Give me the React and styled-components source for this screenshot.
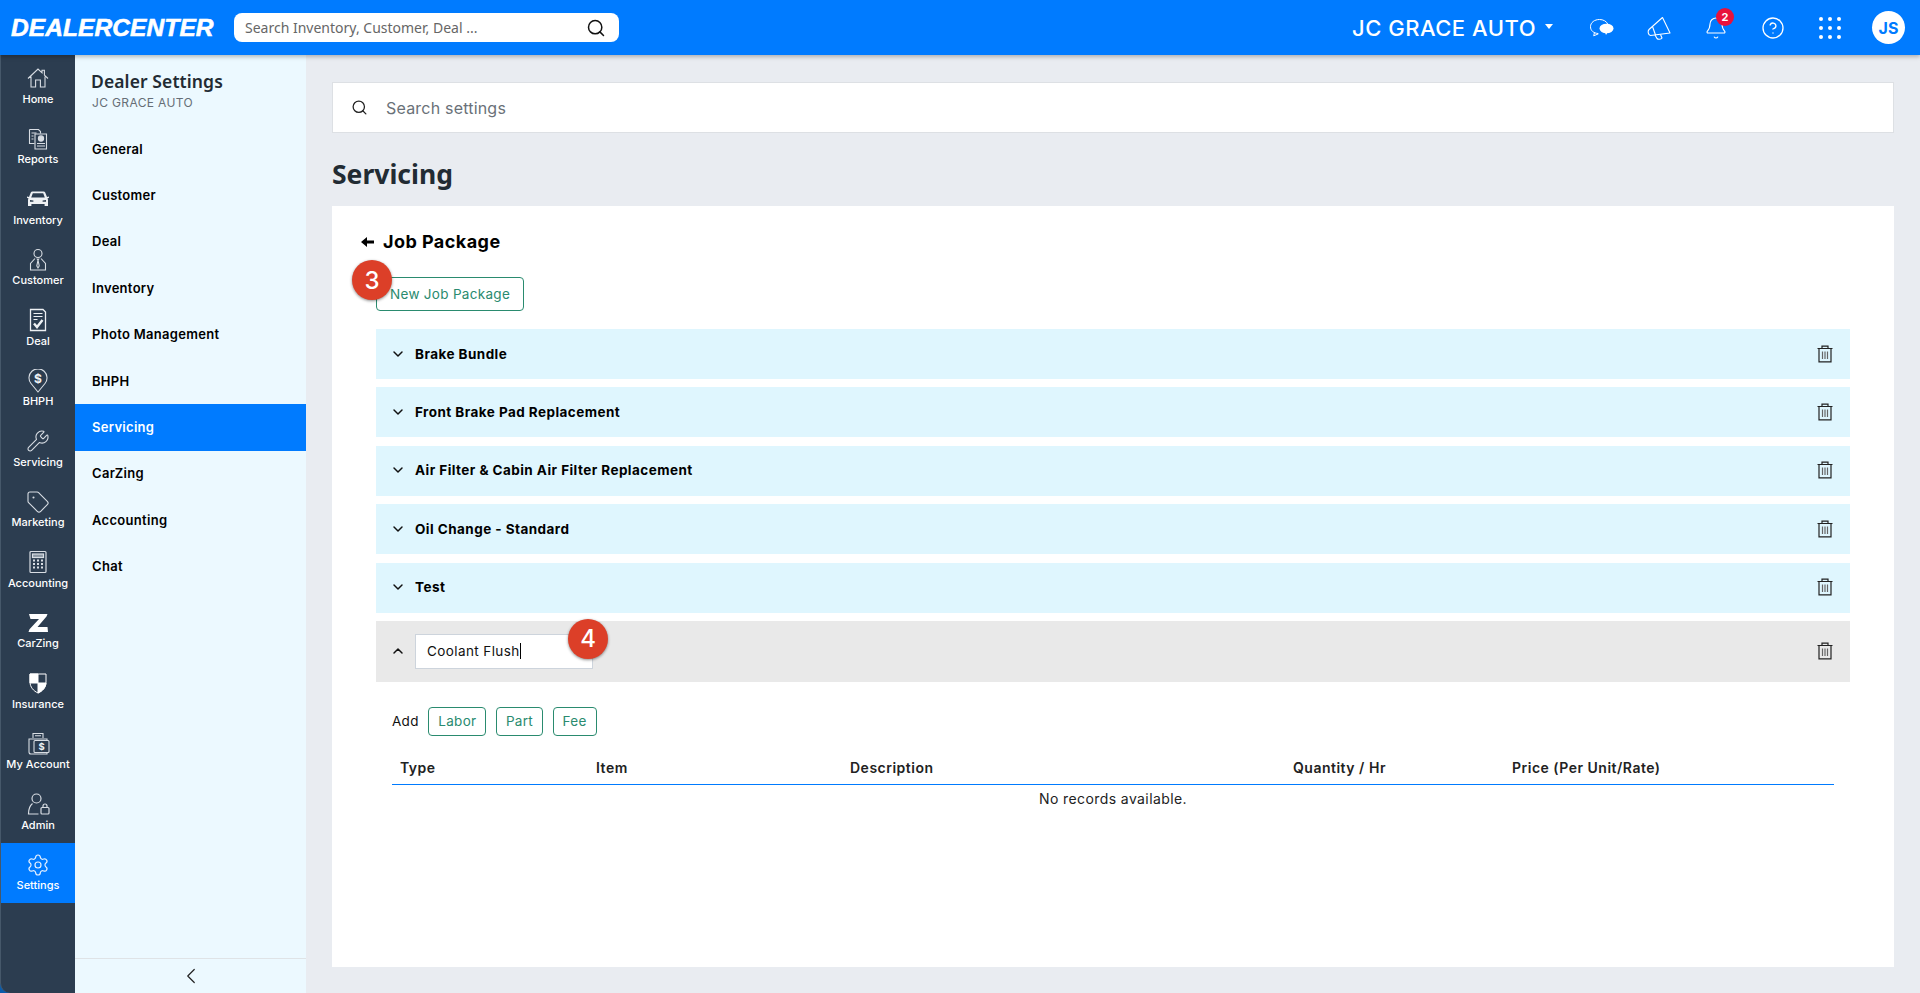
import styled, { createGlobalStyle } from 'styled-components';
import {
  Search,
  Wrench,
  Tag,
  Settings,
  Bell,
  CircleHelp,
  ChevronDown,
  ChevronUp,
  ChevronLeft,
} from 'lucide-react';

const GlobalStyle = createGlobalStyle`
  html, body {
    margin: 0;
    padding: 0;
    height: 100%;
    overflow: hidden;
    background: #e9ecf1;
    font-family: 'Inter', 'Liberation Sans', sans-serif;
  }
  * { box-sizing: border-box; }
`;

const HomeIcon = () => (
  <svg width="24" height="24" viewBox="0 0 24 24" fill="none" stroke="#d8dde3" strokeWidth="1.1">
    <path d="M2 12.500 12 3l4 3.800V4.200h2.400v4.900L22 12.500M5 10.500V21h4.600v-7h4.800v7H19V10.500" />
  </svg>
);
const ReportsIcon = () => (
  <svg width="24" height="24" viewBox="0 0 24 24" fill="none" stroke="#d8dde3" strokeWidth="1.1">
    <path d="M3.500 2.500h9l2 2v2M3.500 2.500v14h5" />
    <path d="M9 7h11.500v15H9z" />
    <circle cx="15" cy="11.500" r="2.600" fill="#d8dde3" />
    <path d="M11 16.500h8M11 19h8M5.500 6h5M5.500 9h2M5.500 12h2" />
  </svg>
);
const CarIcon = () => (
  <svg width="24" height="24" viewBox="0 0 24 24" fill="#eef1f4">
    <path d="M6.500 4.500h11c.8 0 1.400.4 1.700 1.100L21 10l2-.6v1.400l-1.600.6c.4.5.6 1 .6 1.600V19h-3.400v-2H5.400v2H2v-6c0-.6.2-1.100.6-1.600L1 10.800V9.400l2 .6 1.800-4.400c.3-.7.900-1.100 1.700-1.100zm.3 1.800L5.200 10.500h13.600l-1.600-4.200H6.800zM4 13v1.800h3.400V13.600L4 13zm16 0-3.400.6v1.200H20V13z" fillRule="evenodd" />
  </svg>
);
const CustomerIcon = () => (
  <svg width="24" height="24" viewBox="0 0 24 24" fill="none" stroke="#d8dde3" strokeWidth="1.1">
    <circle cx="12" cy="5.500" r="4" />
    <path d="M9 10.500 4.500 15.500V22h15v-6.500L15 10.500" />
    <path d="m10.800 10.500 1.200 1.500 1.200-1.500M12 12l-1.200 6 1.200 2 1.200-2z" />
  </svg>
);
const DealIcon = () => (
  <svg width="24" height="24" viewBox="0 0 24 24" fill="none" stroke="#eef1f4" strokeWidth="1.300">
    <path d="M4.500 1.500h12.500l2.500 2.500v18.500h-15z" />
    <path d="M7.500 5.500h9M7.500 8.500h9M7.500 11.500h4" strokeWidth="1" />
    <path d="m8 15.500 3 3.500 5.500-7" strokeWidth="2.400" />
  </svg>
);
const PinIcon = () => (
  <svg width="24" height="24" viewBox="0 0 24 24" fill="none" stroke="#d8dde3" strokeWidth="1.100">
    <path d="M12 23 5 14.500a9 9 0 1 1 14 0z" />
    <text x="12" y="14" fontSize="12" fontWeight="700" textAnchor="middle" fill="#eef1f4" stroke="none" fontFamily="Inter, sans-serif">$</text>
  </svg>
);
const CalcIcon = () => (
  <svg width="24" height="24" viewBox="0 0 24 24" fill="none" stroke="#d8dde3" strokeWidth="1.200">
    <rect x="4" y="1.500" width="16" height="21" rx="1" />
    <rect x="6.500" y="4" width="11" height="3.500" fill="#8b97a3" />
    <path d="M7 10.500h2M11 10.500h2M15 10.500h2M7 14h2M11 14h2M15 14h2M7 17.500h2M11 17.500h2M15 17.500h2" strokeWidth="1.800" />
  </svg>
);
const ZIcon = () => (
  <svg width="24" height="24" viewBox="0 0 24 24" fill="#ffffff">
    <path d="M3 3h18.500l-1 2.500L11.500 16h10l.5 5H2.500l1-2.800L13 8H4.500z" />
  </svg>
);
const ShieldIcon = () => (
  <svg width="24" height="24" viewBox="0 0 24 24" fill="#ffffff" stroke="#ffffff" strokeWidth="1">
    <path d="M4 3h16v8c0 5-3.500 9-8 11-4.500-2-8-6-8-11z" fill="none" />
    <path d="M4 3h8v9H4zM12 12h8c-.2 4.500-3.500 8.200-8 10z" />
  </svg>
);
const WalletIcon = () => (
  <svg width="24" height="24" viewBox="0 0 24 24" fill="none" stroke="#d8dde3" strokeWidth="1.100">
    <path d="M7 6V1.500h10V6M9 3.800h6M3 7h18v15H5a2 2 0 0 1-2-2z" />
    <rect x="8" y="8.500" width="15" height="12" rx="1" fill="#2c3d50" />
    <text x="15.500" y="18" fontSize="9.500" fontWeight="700" textAnchor="middle" fill="#eef1f4" stroke="none" fontFamily="Inter, sans-serif">$</text>
  </svg>
);
const AdminIcon = () => (
  <svg width="24" height="24" viewBox="0 0 24 24" fill="none" stroke="#d8dde3" strokeWidth="1.200">
    <circle cx="10.500" cy="6.500" r="4.500" />
    <path d="M6.500 11.500C4 13.500 2.500 17 2.500 22h10" />
    <rect x="15" y="15.500" width="8" height="6.500" rx="1" />
    <path d="M17 15.500v-1.500a2 2 0 0 1 4 0v1.500" />
  </svg>
);
const ChatIcon = () => (
  <svg width="24" height="24" viewBox="0 0 24 24" fill="none" stroke="#ffffff" strokeWidth="1">
    <path d="M8 17.500c-4.500-.3-7.500-3-7.500-6.800C.5 6.500 4.500 3.500 9.500 3.500c3.800 0 7 1.800 8.200 4.500M4.500 16.500l-.8 3.300 4.800-2" />
    <ellipse cx="16.500" cy="12.500" rx="7" ry="4.800" fill="#ffffff" stroke="none" />
    <path d="m15 16.500 1 2.500 1.500-2.500z" fill="#ffffff" stroke="none" />
  </svg>
);
const MegaphoneIcon = () => (
  <svg width="24" height="24" viewBox="0 0 24 24" fill="none" stroke="#ffffff" strokeWidth="1.100" strokeLinejoin="round">
    <path d="M15.500 1.500 23 17 3.500 19.500C1 19 .5 15 2 13.500z" />
    <path d="M5.500 10.500 8.500 19" />
    <path d="m8 19 2 3.500c1.200 1.200 4 1 5-.5l-1.500-3.500" />
  </svg>
);
const GridIcon = () => (
  <svg width="22" height="22" viewBox="0 0 22 22" fill="#ffffff">
    {[2, 11, 20].map((y) =>
      [2, 11, 20].map((x) => <circle key={`${x}-${y}`} cx={x} cy={y} r="2" />)
    )}
  </svg>
);
const TrashIcon = () => (
  <svg width="16" height="18" viewBox="0 0 16 18" fill="none" stroke="#222" strokeWidth="1.200">
    <path d="M.5 3.500h15M5 3.500V1.200h6v2.300M2 3.500v13.300h12V3.500" />
    <path d="M5.500 6.500v7.500M8 6.500v7.500M10.500 6.500v7.500" stroke="#666" />
  </svg>
);
const BackArrow = () => (
  <svg width="13" height="12" viewBox="0 0 13 12" fill="#000">
    <path d="M0 6 6 1v3.500h7v3H6V11z" />
  </svg>
);

const navItems = [
  { label: 'Home', icon: <HomeIcon /> },
  { label: 'Reports', icon: <ReportsIcon /> },
  { label: 'Inventory', icon: <CarIcon /> },
  { label: 'Customer', icon: <CustomerIcon /> },
  { label: 'Deal', icon: <DealIcon /> },
  { label: 'BHPH', icon: <PinIcon /> },
  { label: 'Servicing', icon: <Wrench size={24} strokeWidth={1.1} color="#d8dde3" /> },
  { label: 'Marketing', icon: <Tag size={24} strokeWidth={1.1} color="#d8dde3" /> },
  { label: 'Accounting', icon: <CalcIcon /> },
  { label: 'CarZing', icon: <ZIcon /> },
  { label: 'Insurance', icon: <ShieldIcon /> },
  { label: 'My Account', icon: <WalletIcon /> },
  { label: 'Admin', icon: <AdminIcon /> },
  { label: 'Settings', icon: <Settings size={24} strokeWidth={1.2} color="#e4f0ff" />, active: true },
];

const settingsMenu = [
  'General',
  'Customer',
  'Deal',
  'Inventory',
  'Photo Management',
  'BHPH',
  'Servicing',
  'CarZing',
  'Accounting',
  'Chat',
];

const packages = [
  'Brake Bundle',
  'Front Brake Pad Replacement',
  'Air Filter & Cabin Air Filter Replacement',
  'Oil Change - Standard',
  'Test',
];

const columns = ['Type', 'Item', 'Description', 'Quantity / Hr', 'Price (Per Unit/Rate)'];

export default function App() {
  return (
    <Page>
      <GlobalStyle />
      <TopBar>
        <Logo>DEALERCENTER</Logo>
        <GlobalSearch>
          <GlobalSearchText>Search Inventory, Customer, Deal ...</GlobalSearchText>
          <Search size={20} strokeWidth={1.8} color="#111" />
        </GlobalSearch>
        <DealerName>JC GRACE AUTO</DealerName>
        <Caret />
        <TopIcons>
          <TopIcon><ChatIcon /></TopIcon>
          <TopIcon><MegaphoneIcon /></TopIcon>
          <TopIcon>
            <Bell size={24} strokeWidth={1.1} />
            <NotifyBadge>2</NotifyBadge>
          </TopIcon>
          <TopIcon><CircleHelp size={24} strokeWidth={1.3} /></TopIcon>
          <TopIcon><GridIcon /></TopIcon>
        </TopIcons>
        <Avatar>JS</Avatar>
      </TopBar>
      <Body>
        <Rail>
          {navItems.map((item) => (
            <RailItem key={item.label} $active={item.active}>
              <RailIcon>{item.icon}</RailIcon>
              <RailLabel>{item.label}</RailLabel>
            </RailItem>
          ))}
        </Rail>
        <SidePanel>
          <PanelTitle>Dealer Settings</PanelTitle>
          <PanelSub>JC GRACE AUTO</PanelSub>
          <PanelMenu>
            {settingsMenu.map((name) => (
              <PanelItem key={name} $active={name === 'Servicing'}>{name}</PanelItem>
            ))}
          </PanelMenu>
          <PanelFooter>
            <ChevronLeft size={26} strokeWidth={1.1} color="#222" />
          </PanelFooter>
        </SidePanel>
        <Main>
          <SettingsSearch>
            <Search size={17} strokeWidth={1.8} color="#222" />
            <SettingsSearchText>Search settings</SettingsSearchText>
          </SettingsSearch>
          <PageTitle>Servicing</PageTitle>
          <Card>
            <CardHeading>
              <BackArrow />
              Job Package
            </CardHeading>
            <CardBody>
              <ButtonWrap>
                <StepBadge $left={-24} $top={-17}>3</StepBadge>
                <OutlineButton $wide>New Job Package</OutlineButton>
              </ButtonWrap>
              <Rows>
                {packages.map((name) => (
                  <Row key={name}>
                    <ChevronDown size={16} strokeWidth={2.2} color="#111" />
                    <RowName>{name}</RowName>
                    <TrashIcon />
                  </Row>
                ))}
                <OpenRow>
                  <ChevronUp size={16} strokeWidth={2.2} color="#111" />
                  <NameField>
                    <NameText>Coolant Flush</NameText>
                    <StepBadge $left={152} $top={-16}>4</StepBadge>
                  </NameField>
                  <TrashIcon />
                </OpenRow>
              </Rows>
              <Details>
                <AddRow>
                  <AddLabel>Add</AddLabel>
                  <OutlineButton>Labor</OutlineButton>
                  <OutlineButton>Part</OutlineButton>
                  <OutlineButton>Fee</OutlineButton>
                </AddRow>
                <TableHead>
                  {columns.map((col) => (
                    <HeadCell key={col}>{col}</HeadCell>
                  ))}
                </TableHead>
                <EmptyText>No records available.</EmptyText>
              </Details>
            </CardBody>
          </Card>
        </Main>
      </Body>
    </Page>
  );
}

const Page = styled.div`
  display: flex;
  flex-direction: column;
  height: 993px;
  width: 1920px;
  background: #0b5cab;
`;
const TopBar = styled.header`
  align-items: center;
  background: #007bff;
  box-shadow: 0 2px 4px rgba(0, 0, 0, 0.25);
  color: #fff;
  display: flex;
  flex: 0 0 55px;
  padding: 0 15px 0 11px;
  position: relative;
  z-index: 2;
`;
const Logo = styled.div`
  color: #fff;
  font-family: 'Liberation Sans', sans-serif;
  font-size: 24.5px;
  font-style: italic;
  font-weight: 700;
  letter-spacing: 0.1px;
  width: 223px;
  -webkit-text-stroke: 0.6px #fff;
`;
const GlobalSearch = styled.div`
  align-items: center;
  background: #fff;
  border-radius: 8px;
  display: flex;
  height: 29px;
  justify-content: space-between;
  padding: 0 13px 0 11px;
  width: 385px;
`;
const GlobalSearchText = styled.span`
  color: #666;
  font-family: 'Noto Sans', sans-serif;
  font-size: 14px;
`;
const DealerName = styled.div`
  font-size: 22px;
  font-weight: 500;
  letter-spacing: 0.5px;
  margin-left: auto;
`;
const Caret = styled.span`
  border-left: 4px solid transparent;
  border-right: 4px solid transparent;
  border-top: 5px solid #fff;
  margin: 0 0 3px 9px;
`;
const TopIcons = styled.div`
  align-items: center;
  display: flex;
  gap: 33px;
  margin-left: 37px;
`;
const TopIcon = styled.div`
  align-items: center;
  color: #fff;
  display: flex;
  height: 24px;
  justify-content: center;
  position: relative;
  width: 24px;
`;
const NotifyBadge = styled.span`
  align-items: center;
  background: #e8123c;
  border-radius: 50%;
  color: #fff;
  display: flex;
  font-size: 11px;
  font-weight: 700;
  height: 18px;
  justify-content: center;
  position: absolute;
  right: -6px;
  top: -8px;
  width: 18px;
`;
const Avatar = styled.div`
  align-items: center;
  background: #fff;
  border-radius: 50%;
  color: #007bff;
  display: flex;
  font-size: 16px;
  font-weight: 700;
  height: 33px;
  justify-content: center;
  margin-left: 30px;
  width: 33px;
`;
const Body = styled.div`
  display: flex;
  flex: 1;
  min-height: 0;
`;
const Rail = styled.nav`
  background: #2c3d50;
  border-bottom-left-radius: 10px;
  border-left: 1px solid #46586a;
  display: flex;
  flex: 0 0 75px;
  flex-direction: column;
  padding-top: 1px;
`;
const RailItem = styled.div`
  align-items: center;
  background: ${(p) => (p.$active ? '#007bff' : 'transparent')};
  color: #fff;
  display: flex;
  flex: 0 0 60.5px;
  flex-direction: column;
  padding-top: 9px;
`;
const RailIcon = styled.div`
  align-items: center;
  display: flex;
  height: 26px;
  justify-content: center;
`;
const RailLabel = styled.span`
  font-family: 'Inter', sans-serif;
  font-size: 11px;
  font-weight: 500;
  line-height: 14px;
  margin-top: 0.5px;
  white-space: nowrap;
`;
const SidePanel = styled.aside`
  background: #ecf9ff;
  display: flex;
  flex: 0 0 231px;
  flex-direction: column;
  padding-top: 16px;
`;
const PanelTitle = styled.div`
  color: #222b33;
  font-family: 'Noto Sans', sans-serif;
  font-size: 17.500px;
  font-weight: 600;
  letter-spacing: 0.1px;
  line-height: 20px;
  padding-left: 16px;
`;
const PanelSub = styled.div`
  color: #666e76;
  font-size: 12px;
  letter-spacing: 0.35px;
  line-height: 16px;
  margin-top: 4px;
  padding-left: 17px;
`;
const PanelMenu = styled.div`
  display: flex;
  flex: 1;
  flex-direction: column;
  margin-top: 15px;
`;
const PanelItem = styled.div`
  align-items: center;
  background: ${(p) => (p.$active ? '#007bff' : 'transparent')};
  color: ${(p) => (p.$active ? '#fff' : '#000')};
  display: flex;
  flex: 0 0 46.4px;
  font-size: 13px;
  font-weight: 600;
  letter-spacing: 0.3px;
  padding: 0 0 1px 17px;
`;
const PanelFooter = styled.div`
  align-items: center;
  border-top: 1px solid #dfe3e6;
  display: flex;
  flex: 0 0 35px;
  justify-content: center;
`;
const Main = styled.main`
  background: #e9ecf1;
  display: flex;
  flex: 1;
  flex-direction: column;
  min-width: 0;
  padding: 27px 26px 26px;
`;
const SettingsSearch = styled.div`
  align-items: center;
  background: #fff;
  border: 1px solid #dde0e4;
  display: flex;
  flex: 0 0 51px;
  gap: 18px;
  padding-left: 18px;
`;
const SettingsSearchText = styled.span`
  color: #6a7178;
  font-size: 16px;
  letter-spacing: 0.2px;
`;
const PageTitle = styled.h1`
  color: #222b33;
  font-family: 'Noto Sans', sans-serif;
  font-size: 26.5px;
  font-weight: 700;
  line-height: 32px;
  margin: 25px 0 16px;
`;
const Card = styled.section`
  background: #fff;
  display: flex;
  flex: 1;
  flex-direction: column;
  padding: 24px 44px 0 29px;
`;
const CardHeading = styled.h2`
  align-items: center;
  color: #000;
  display: flex;
  font-size: 18px;
  font-weight: 700;
  gap: 9px;
  letter-spacing: 0.45px;
  line-height: 24px;
  margin: 0;
`;
const CardBody = styled.div`
  margin-left: 15px;
  margin-top: 23px;
`;
const ButtonWrap = styled.div`
  display: inline-block;
  position: relative;
  vertical-align: top;
`;
const OutlineButton = styled.button`
  background: #fff;
  border: 1px solid #2a8b6f;
  border-radius: 4px;
  color: #2a8b6f;
  font-family: 'Inter', sans-serif;
  font-size: 13.5px;
  height: ${(p) => (p.$wide ? '34px' : '29px')};
  letter-spacing: 0.3px;
  padding: ${(p) => (p.$wide ? '0 13px' : '0 9px')};
`;
const StepBadge = styled.span`
  align-items: center;
  background: #dc3f28;
  border-radius: 50%;
  box-shadow: 0 1px 3px rgba(0, 0, 0, 0.45);
  color: #fff;
  display: flex;
  font-family: 'Inter', sans-serif;
  font-size: 24px;
  font-weight: 500;
  height: 40px;
  justify-content: center;
  left: ${(p) => p.$left}px;
  position: absolute;
  top: ${(p) => p.$top}px;
  width: 40px;
  z-index: 1;
`;
const Rows = styled.div`
  display: flex;
  flex-direction: column;
  gap: 8.4px;
  margin-top: 18px;
`;
const Row = styled.div`
  align-items: center;
  background: #dff6fe;
  display: flex;
  gap: 9px;
  height: 50px;
  padding: 0 17px 1px 14px;
`;
const OpenRow = styled(Row)`
  background: #e9e9e9;
  height: 61px;
  padding-bottom: 0;
`;
const RowName = styled.span`
  color: #000;
  flex: 1;
  font-size: 13.5px;
  font-weight: 700;
  letter-spacing: 0.45px;
`;
const NameField = styled.div`
  align-items: center;
  background: #fff;
  border: 1px solid #cdd4dc;
  display: flex;
  height: 35px;
  margin-right: auto;
  padding-left: 11px;
  position: relative;
  width: 178px;
`;
const NameText = styled.span`
  border-right: 1px solid #000;
  color: #111;
  font-size: 13.5px;
  letter-spacing: 0.4px;
  line-height: 16px;
`;
const Details = styled.div`
  padding: 25px 16px 0;
`;
const AddRow = styled.div`
  align-items: center;
  display: flex;
  gap: 9.5px;
`;
const AddLabel = styled.span`
  color: #111;
  font-size: 13.5px;
  letter-spacing: 0.3px;
  padding-bottom: 1px;
`;
const TableHead = styled.div`
  border-bottom: 1px solid #007bff;
  display: grid;
  grid-template-columns: 196px 254px 443px 219px 1fr;
  margin-top: 18px;
  padding-bottom: 2px;
`;
const HeadCell = styled.div`
  color: #222;
  font-size: 14px;
  font-weight: 600;
  letter-spacing: 0.5px;
  line-height: 28px;
  padding-left: 8px;
`;
const EmptyText = styled.div`
  color: #222;
  font-size: 14px;
  letter-spacing: 0.4px;
  line-height: 28px;
  text-align: center;
`;
